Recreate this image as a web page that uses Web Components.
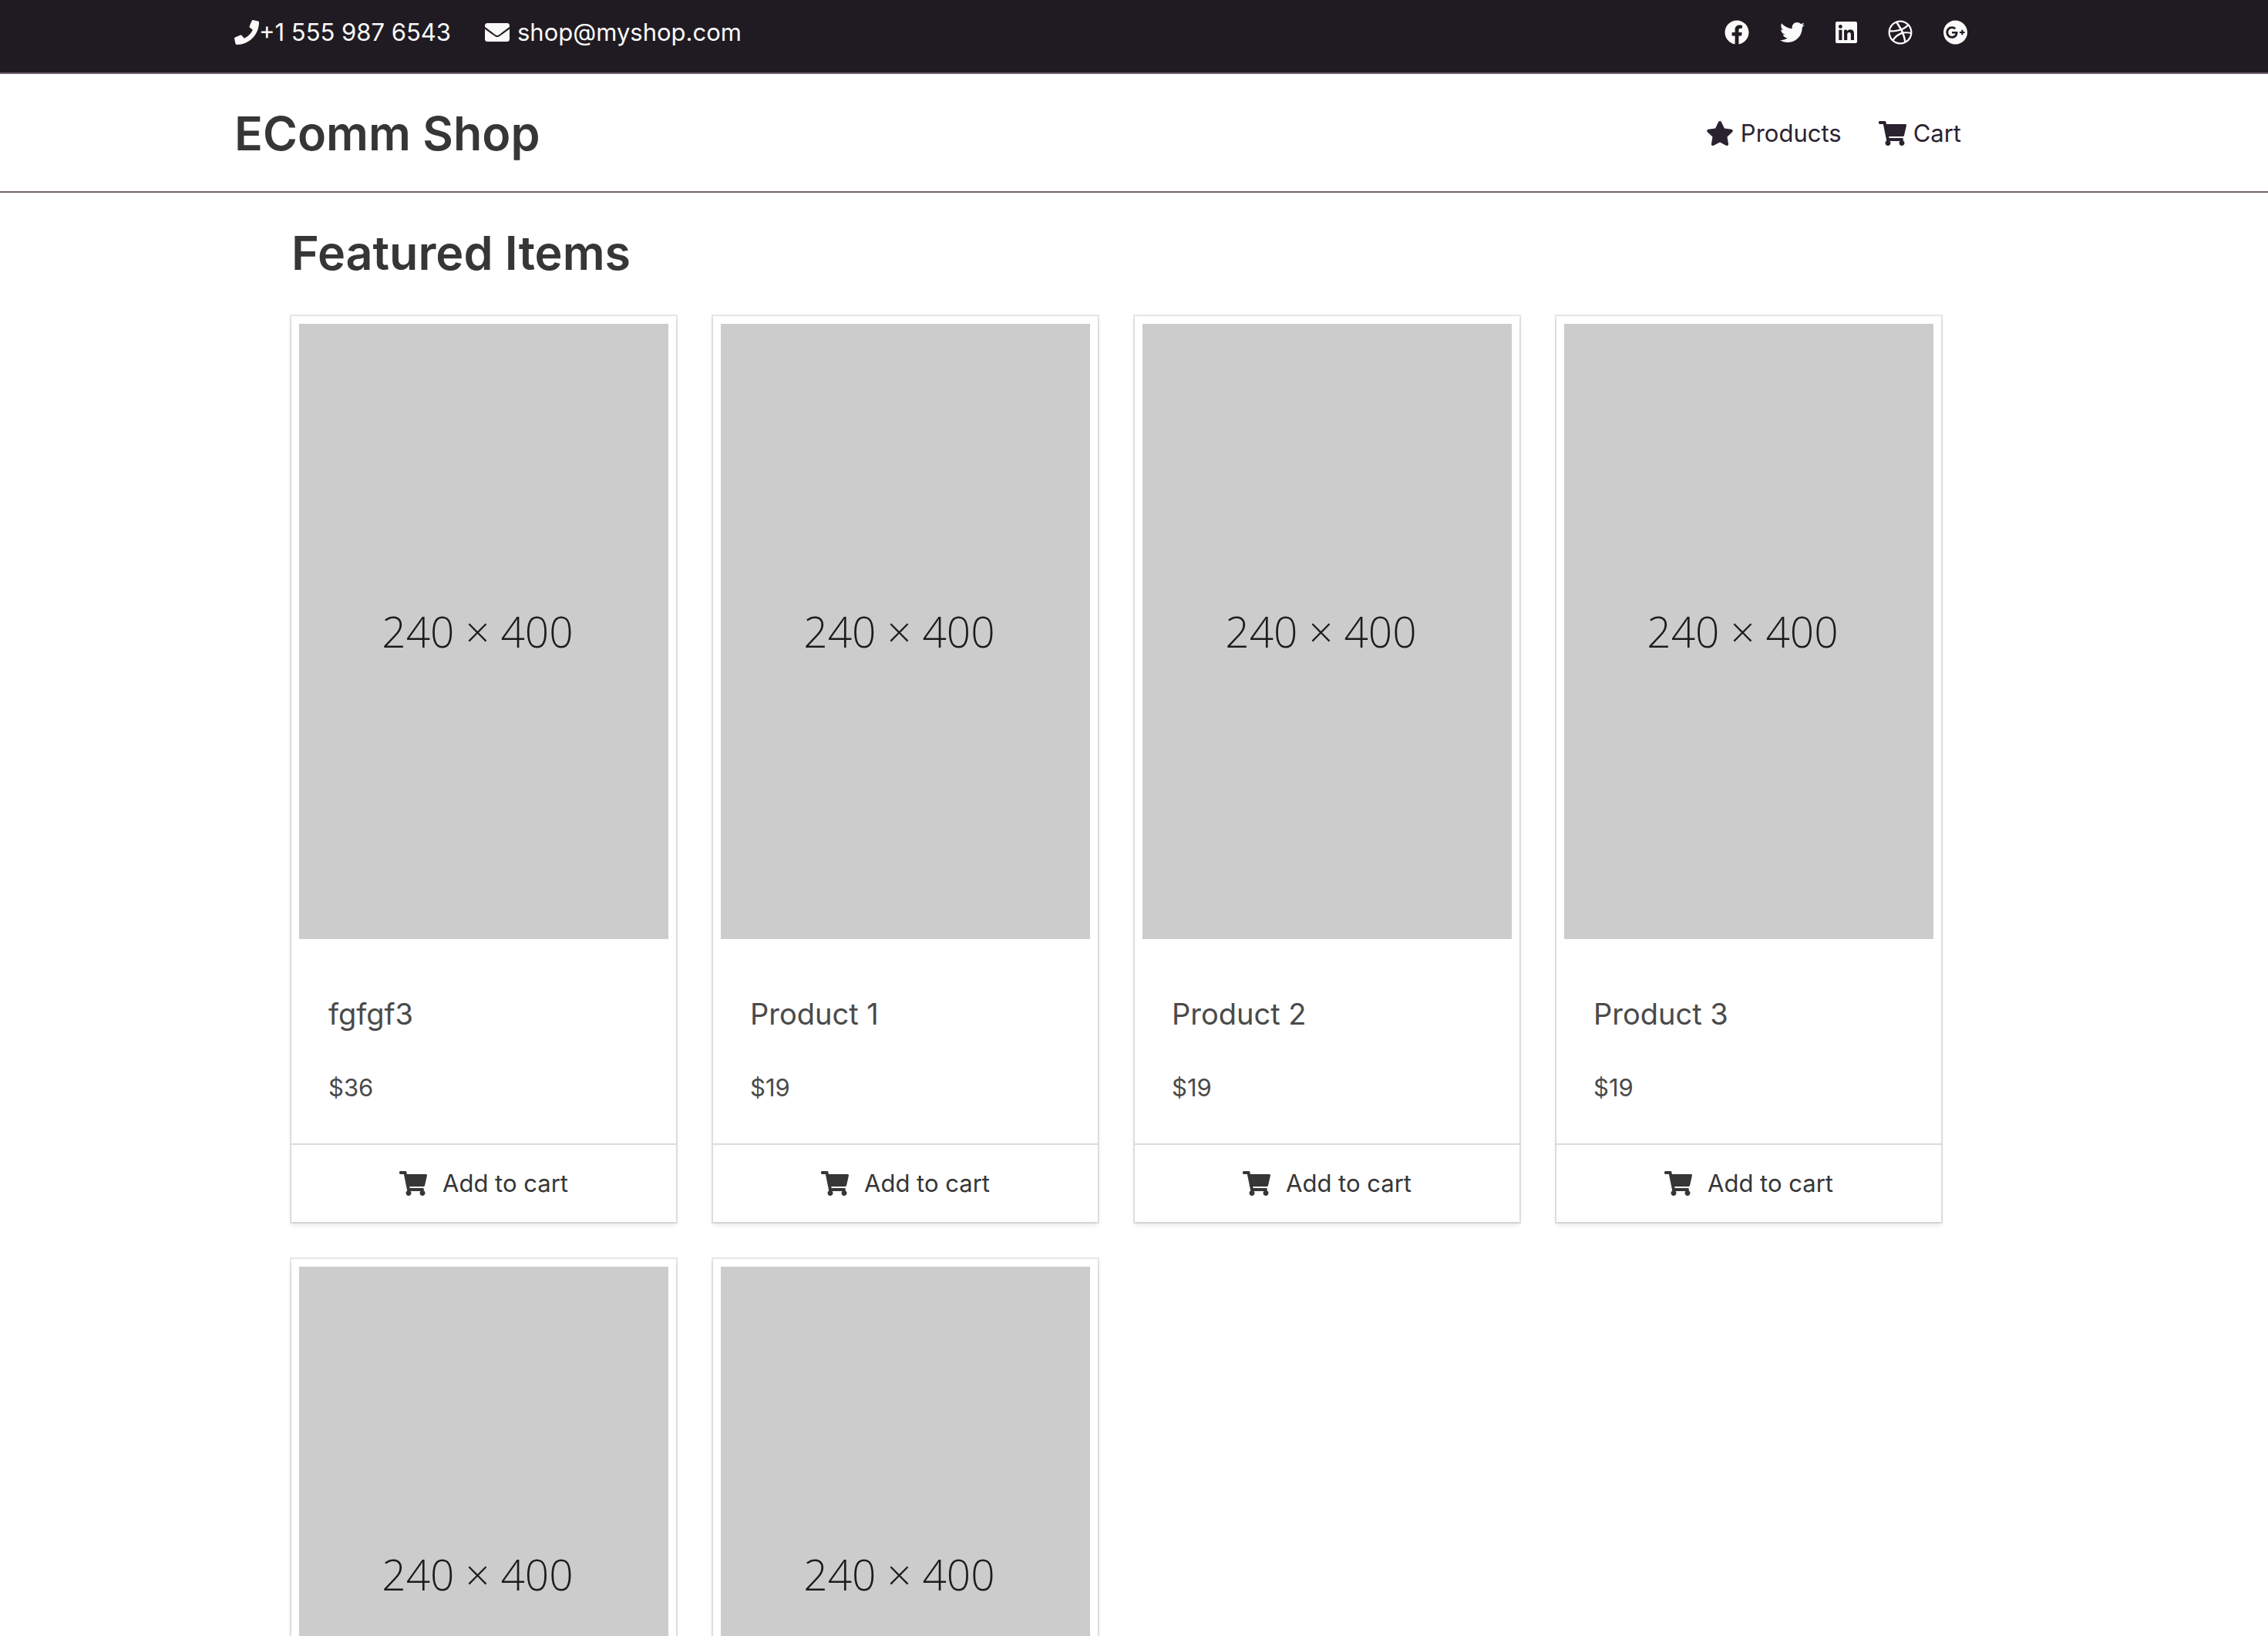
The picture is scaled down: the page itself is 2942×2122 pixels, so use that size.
<!DOCTYPE html>
<html lang="en">
<head>
<meta charset="utf-8">
<meta name="viewport" content="width=device-width, initial-scale=1">
<title>EComm Shop</title>
<style>
  html { background: #fff; }
  body {
    margin: 0;
    height: 100vh;
    overflow: hidden;
    font-family: Inter, "Liberation Sans", sans-serif;
    font-size: 31px;
    line-height: 48px;
    color: #4a4a4a;
  }
</style>
</head>
<body>
<shop-topbar></shop-topbar>
<shop-header>EComm Shop</shop-header>
<shop-section>
  <span slot="title">Featured Items</span>
  <product-card name="fgfgf3" price="$36"></product-card>
  <product-card name="Product 1" price="$19"></product-card>
  <product-card name="Product 2" price="$19"></product-card>
  <product-card name="Product 3" price="$19"></product-card>
  <product-card></product-card>
  <product-card></product-card>
</shop-section>

<script>
const ICONS = {
  phone: [512, 'M493.4 24.6l-104-24c-11.3-2.6-22.9 3.3-27.5 13.9l-48 112c-4.2 9.8-1.4 21.3 6.9 28l60.6 49.6c-36 76.7-98.9 140.5-177.2 177.2l-49.6-60.6c-6.8-8.3-18.2-11.1-28-6.9l-112 48C3.9 366.5-2 378.1.6 389.4l24 104C27.1 504.2 36.7 512 48 512c256.1 0 464-207.5 464-464 0-11.2-7.7-20.9-18.6-23.4z'],
  envelope: [512, 'M502.3 190.8c3.9-3.1 9.7-.2 9.7 4.7V400c0 26.5-21.5 48-48 48H48c-26.5 0-48-21.5-48-48V195.6c0-5 5.7-7.8 9.7-4.7 22.4 17.4 52.1 39.5 154.1 113.6 21.1 15.4 56.7 47.8 92.2 47.6 35.7.3 72-32.8 92.3-47.6 102-74.1 131.6-96.3 154-113.7zM256 320c23.2.4 56.6-29.2 73.4-41.4 132.7-96.3 142.8-104.7 173.4-128.7 5.8-4.5 9.2-11.5 9.2-18.9v-19c0-26.5-21.5-48-48-48H48c-26.5 0-48 21.5-48 48v19c0 7.4 3.4 14.3 9.2 18.9 30.6 23.9 40.7 32.4 173.4 128.7 16.8 12.2 50.2 41.8 73.4 41.4z'],
  facebook: [512, 'M504 256C504 119 393 8 256 8S8 119 8 256c0 123.78 90.69 226.38 209.25 245V327.69h-63V256h63v-54.64c0-62.15 37-96.48 93.67-96.48 27.14 0 55.52 4.84 55.52 4.84v61h-31.28c-30.8 0-40.41 19.12-40.41 38.73V256h68.78l-11 71.69h-57.78V501C413.31 482.38 504 379.78 504 256z'],
  twitter: [512, 'M459.37 151.716c.325 4.548.325 9.097.325 13.645 0 138.72-105.583 298.558-298.558 298.558-59.452 0-114.68-17.219-161.137-47.106 8.447.974 16.568 1.299 25.34 1.299 49.055 0 94.213-16.568 130.274-44.832-46.132-.975-84.792-31.188-98.112-72.772 6.498.974 12.995 1.624 19.818 1.624 9.421 0 18.843-1.3 27.614-3.573-48.081-9.747-84.143-51.98-84.143-102.985v-1.299c13.969 7.797 30.214 12.67 47.431 13.319-28.264-18.843-46.781-51.005-46.781-87.391 0-19.492 5.197-37.36 14.294-52.954 51.655 63.675 129.3 105.258 216.365 109.807-1.624-7.797-2.599-15.918-2.599-24.04 0-57.828 46.782-104.934 104.934-104.934 30.213 0 57.502 12.67 76.67 33.137 23.715-4.548 46.456-13.32 66.599-25.34-7.798 24.366-24.366 44.833-46.132 57.827 21.117-2.273 41.584-8.122 60.426-16.243-14.292 20.791-32.161 39.308-52.628 54.253z'],
  linkedin: [448, 'M416 32H31.9C14.3 32 0 46.5 0 64.3v383.4C0 465.5 14.3 480 31.9 480H416c17.6 0 32-14.5 32-32.3V64.3c0-17.8-14.4-32.3-32-32.3zM135.4 416H69V202.2h66.5V416zm-33.2-243c-21.3 0-38.5-17.3-38.5-38.5S80.9 96 102.2 96c21.2 0 38.5 17.3 38.5 38.5 0 21.3-17.2 38.5-38.5 38.5zm282.1 243h-66.4V312c0-24.8-.5-56.7-34.5-56.7-34.6 0-39.9 27-39.9 54.9V416h-66.4V202.2h63.7v29.2h.9c8.9-16.8 30.6-34.5 62.9-34.5 67.2 0 79.7 44.3 79.7 101.9V416z'],
  dribbble: [512, 'M256 8C119.252 8 8 119.252 8 256s111.252 248 248 248 248-111.252 248-248S392.748 8 256 8zm163.97 114.366c29.503 36.046 47.369 81.957 47.835 131.955-6.984-1.477-77.018-15.682-147.502-6.818-5.752-14.041-11.181-26.393-18.617-41.614 78.321-31.977 113.818-77.482 118.284-83.523zM396.421 97.87c-3.81 5.427-35.697 48.286-111.021 76.519-34.712-63.776-73.185-116.168-79.04-124.008 67.176-16.193 137.966 1.27 190.061 47.489zm-230.48-33.25c5.585 7.659 43.438 60.116 78.537 122.509-99.087 26.313-186.36 25.934-195.834 25.809C62.38 147.205 106.678 92.573 165.941 64.62zM44.17 256.323c0-2.166.043-4.322.108-6.473 9.268.19 111.92 1.513 217.706-30.146 6.064 11.868 11.857 23.915 17.174 35.949-76.599 21.575-146.194 83.527-180.531 142.306C64.794 360.405 44.17 310.73 44.17 256.323zm81.807 167.113c22.127-45.233 82.178-103.622 167.579-132.756 29.74 77.283 42.039 142.053 45.189 160.638-68.112 29.013-150.015 21.053-212.768-27.882zm248.38 8.489c-2.171-12.886-13.446-74.897-41.152-151.033 66.38-10.626 124.7 6.768 131.947 9.055-9.442 58.941-43.273 109.844-90.795 141.978z'],
  google: [496, 'M248 8C111.1 8 0 119.1 0 256s111.1 248 248 248 248-111.1 248-248S384.9 8 248 8zm-70.7 372c-68.8 0-124-55.5-124-124s55.2-124 124-124c31.3 0 60.1 11 83 32.3l-33.6 32.6c-13.2-12.9-31.3-19.1-49.4-19.1-42.9 0-77.2 35.5-77.2 78.1s34.2 78.1 77.2 78.1c32.6 0 64.9-19.1 70.1-53.3h-70.1v-42.6h116.9c1.3 6.8 1.9 13.6 1.9 20.7 0 70.8-47.5 121.2-118.8 121.2zm230.2-106.2v35.5H372v-35.5h-35.5v-35.5H372v-35.5h35.5v35.5h35.2v35.5h-35.2z'],
  star: [576, 'M259.3 17.8L194 150.2 47.9 171.5c-26.2 3.8-36.7 36.1-17.7 54.6l105.7 103-25 145.5c-4.5 26.3 23.2 46 46.4 33.7L288 439.6l130.7 68.7c23.2 12.2 50.9-7.4 46.4-33.7l-25-145.5 105.7-103c19-18.5 8.5-50.8-17.7-54.6L382 150.2 316.7 17.8c-11.7-23.6-45.6-23.9-57.4 0z'],
  cart: [576, 'M528.12 301.319l47.273-208C578.806 78.301 567.391 64 551.99 64H159.208l-9.166-44.81C147.758 8.021 137.93 0 126.529 0H24C10.745 0 0 10.745 0 24v16c0 13.255 10.745 24 24 24h69.883l70.248 343.435C147.325 417.1 136 435.222 136 456c0 30.928 25.072 56 56 56s56-25.072 56-56c0-15.674-6.447-29.835-16.824-40h209.647C430.447 426.165 424 440.326 424 456c0 30.928 25.072 56 56 56s56-25.072 56-56c0-22.172-12.888-41.332-31.579-50.405l5.517-24.276c3.413-15.018-8.002-29.319-23.403-29.319H218.117l-6.545-32h293.145c11.206 0 20.92-7.754 23.403-18.681z']
};

class ShopIcon extends HTMLElement {
  connectedCallback() {
    if (this.shadowRoot) return;
    const [width, path] = ICONS[this.getAttribute('name')];
    this.attachShadow({ mode: 'open' }).innerHTML = `
      <style>
        :host { display: block; flex: none; }
        svg { display: block; height: 32px; width: ${width / 16}px; fill: currentColor; }
      </style>
      <svg viewBox="0 0 ${width} 512" aria-hidden="true"><path d="${path}"/></svg>`;
  }
}

class ShopTopbar extends HTMLElement {
  constructor() {
    super();
    this.attachShadow({ mode: 'open' }).innerHTML = `
      <style>
        :host { display: block; background: #201b22; border-bottom: 2px solid #73636e; color: #fafafa; }
        .inner { box-sizing: border-box; max-width: 2334px; margin: 0 auto; padding: 18px 86px 28px 0;
                 display: flex; justify-content: space-between; align-items: center; }
        .group { display: flex; align-items: center; gap: 40px; }
        .contacts { gap: 44px; }
        a { display: flex; align-items: center; color: inherit; text-decoration: none; }
        .mail { gap: 10px; }
      </style>
      <div class="inner">
        <div class="group contacts">
          <a href="tel:+15559876543"><shop-icon name="phone"></shop-icon><span>+1 555 987 6543</span></a>
          <a class="mail" href="mailto:shop@myshop.com"><shop-icon name="envelope"></shop-icon><span>shop@myshop.com</span></a>
        </div>
        <nav class="group">
          <a href="#"><shop-icon name="facebook"></shop-icon></a>
          <a href="#"><shop-icon name="twitter"></shop-icon></a>
          <a href="#"><shop-icon name="linkedin"></shop-icon></a>
          <a href="#"><shop-icon name="dribbble"></shop-icon></a>
          <a href="#"><shop-icon name="google"></shop-icon></a>
        </nav>
      </div>`;
  }
}

class ShopHeader extends HTMLElement {
  constructor() {
    super();
    this.attachShadow({ mode: 'open' }).innerHTML = `
      <style>
        :host { display: block; background: #fff; border-bottom: 2px solid #73636e; }
        .inner { box-sizing: border-box; max-width: 2334px; margin: 0 auto; padding: 41px 94px 39px 0;
                 display: flex; justify-content: space-between; align-items: center; }
        h1 { margin: 0; font-size: 61px; line-height: 72px; font-weight: 600; color: #363636; }
        nav { display: flex; gap: 48px; }
        a { display: flex; align-items: center; gap: 9px; color: #2b2230; text-decoration: none; }
      </style>
      <div class="inner">
        <h1><slot></slot></h1>
        <nav>
          <a href="#products"><shop-icon name="star"></shop-icon><span>Products</span></a>
          <a href="#cart"><shop-icon name="cart"></shop-icon><span>Cart</span></a>
        </nav>
      </div>`;
  }
}

class ShopSection extends HTMLElement {
  constructor() {
    super();
    this.attachShadow({ mode: 'open' }).innerHTML = `
      <style>
        :host { display: block; box-sizing: border-box; max-width: 2334px; margin: 0 auto; padding: 42px 120px 48px 74px; }
        h2 { margin: 0 0 46px; font-size: 61px; line-height: 72px; font-weight: 600; color: #363636; }
        .grid { display: grid; grid-template-columns: repeat(4, minmax(0, 1fr)); gap: 48px; align-items: start; }
      </style>
      <h2><slot name="title"></slot></h2>
      <div class="grid"><slot></slot></div>`;
  }
}

class ProductCard extends HTMLElement {
  connectedCallback() {
    if (this.shadowRoot) return;
    const name = this.getAttribute('name');
    const details = name ? `
      <div class="content">
        <h3>${name}</h3>
        <p>${this.getAttribute('price')}</p>
      </div>
      <button type="button"><shop-icon name="cart"></shop-icon><span>Add to cart</span></button>` : '';
    this.attachShadow({ mode: 'open' }).innerHTML = `
      <style>
        :host { display: block; background: #fff;
                box-shadow: 0 4px 6px rgba(10, 10, 10, .1), 0 0 0 2px rgba(10, 10, 10, .1); }
        .media { padding: 10px; }
        .image { box-sizing: border-box; aspect-ratio: 240 / 400; padding-right: 16px; background: #ccc; color: #1c1c1c;
                 display: flex; align-items: center; justify-content: center;
                 font-family: "Open Sans", "Noto Sans", sans-serif; font-weight: 300; font-size: 55px; line-height: 72px; }
        .content { padding: 57px 48px 48px; display: flex; flex-direction: column; gap: 42px; }
        h3 { margin: 0; font-size: 38px; line-height: 60px; font-weight: 400; }
        p { margin: 0; }
        button { width: 100%; margin: 0; padding: 26px 0; border: 0; border-top: 2px solid #dbdbdb;
                 background: none; font: inherit; color: #363636;
                 display: flex; align-items: center; justify-content: center; gap: 20px; }
      </style>
      <div class="media"><div class="image">240 × 400</div></div>${details}`;
  }
}

customElements.define('shop-icon', ShopIcon);
customElements.define('shop-topbar', ShopTopbar);
customElements.define('shop-header', ShopHeader);
customElements.define('shop-section', ShopSection);
customElements.define('product-card', ProductCard);
</script>
</body>
</html>
